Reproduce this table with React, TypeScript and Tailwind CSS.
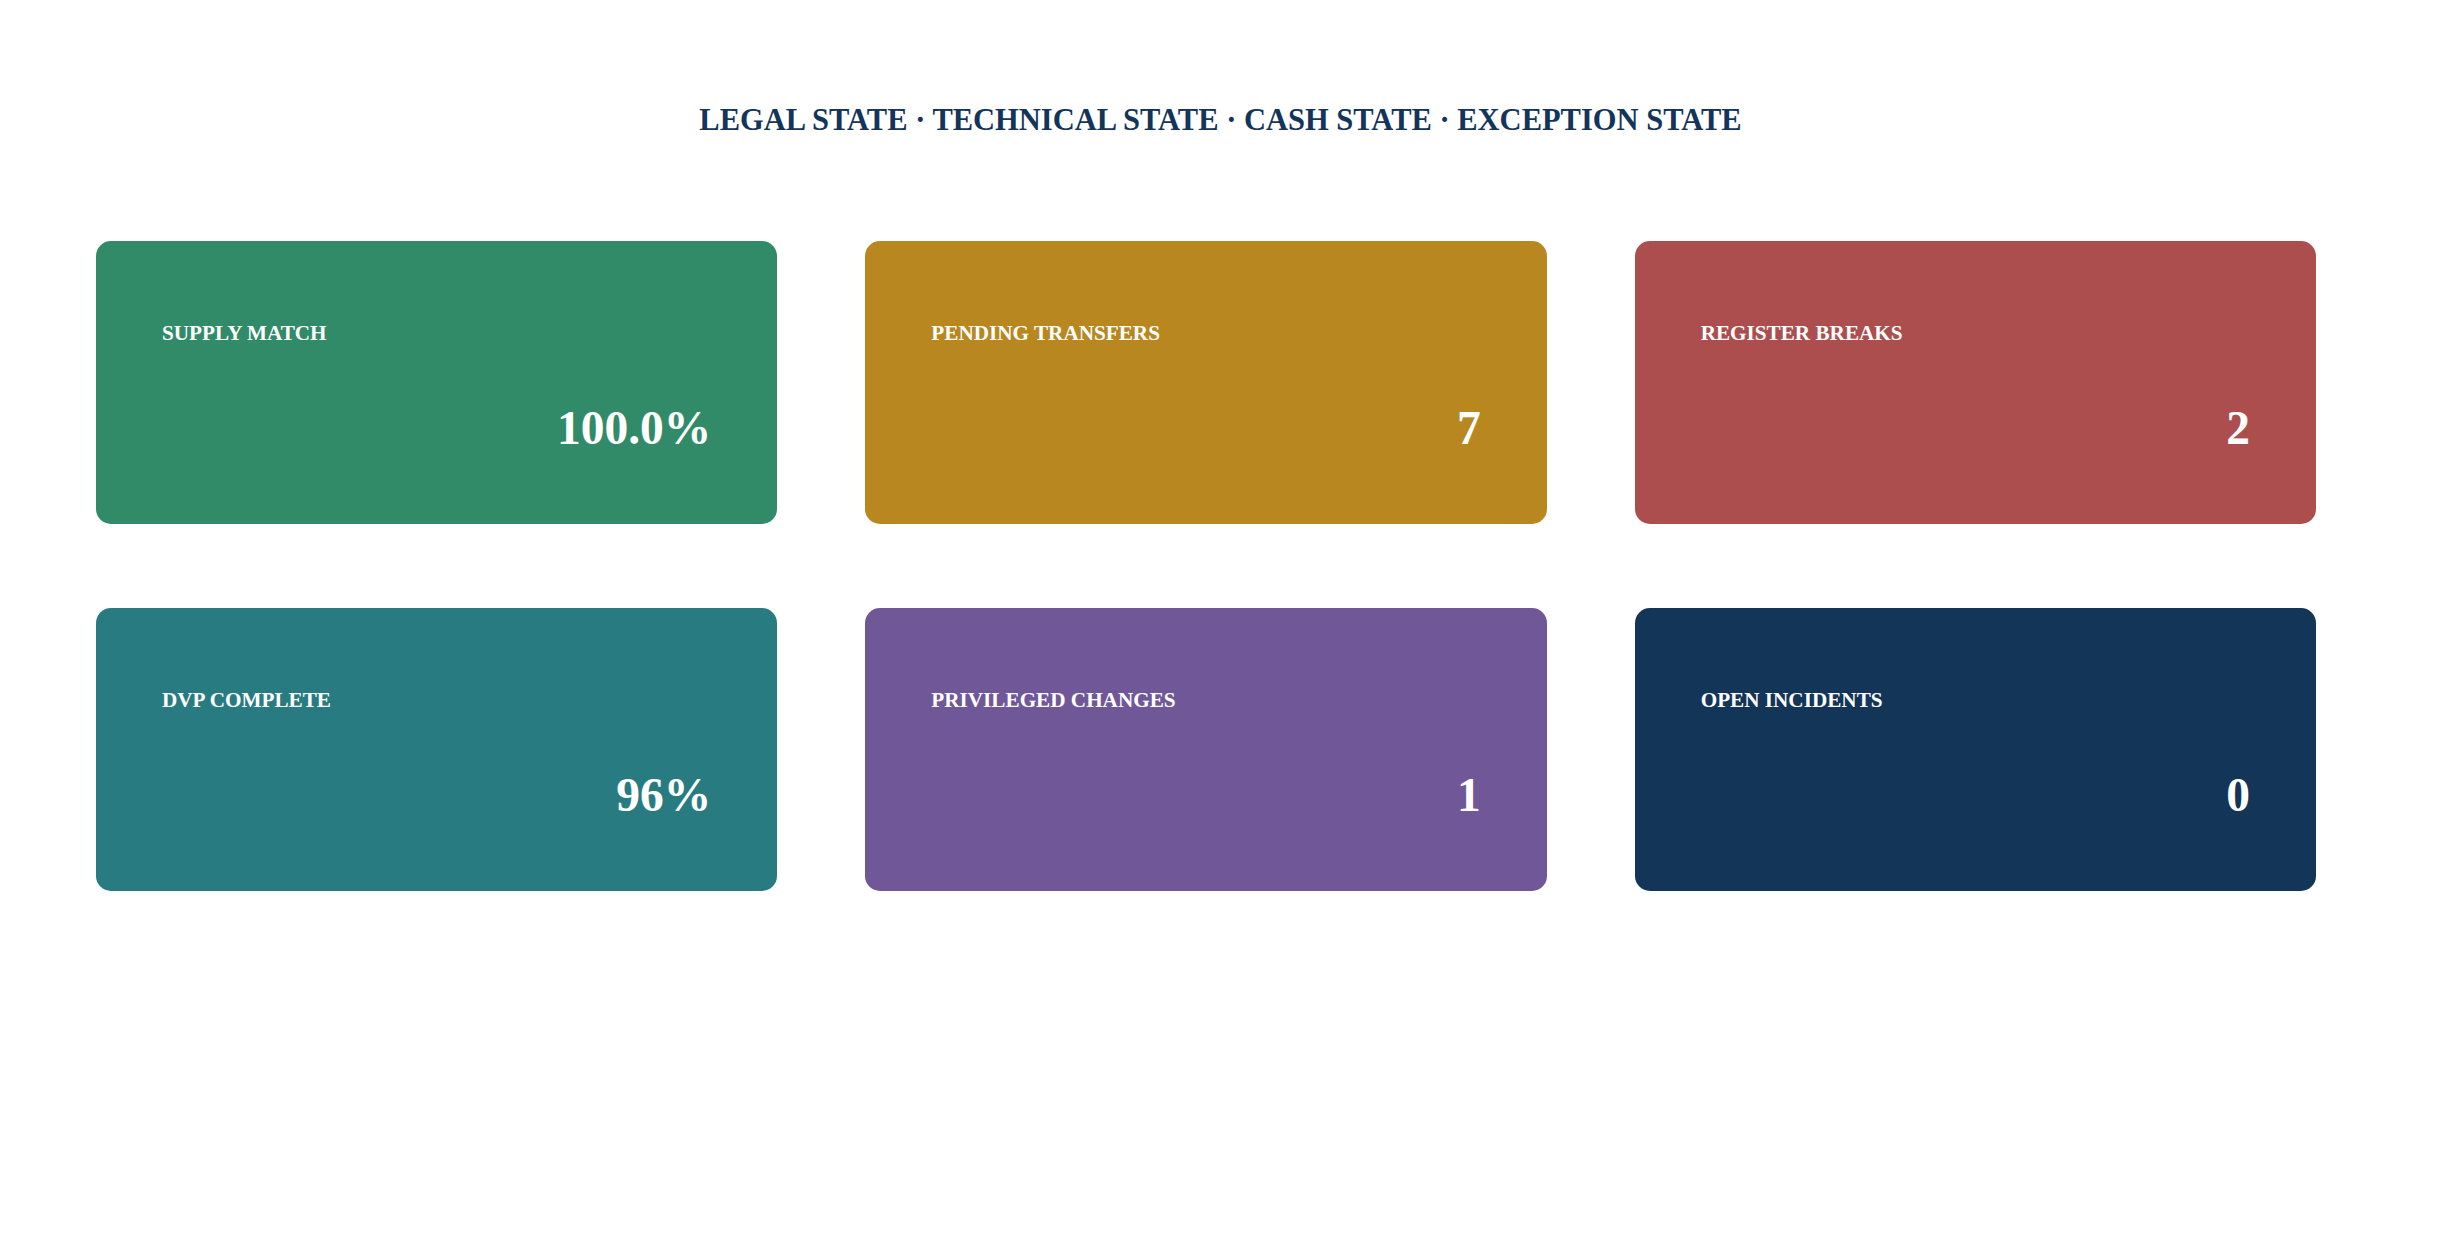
const cards = [
  { label: "SUPPLY MATCH", value: "100.0%", bg: "bg-[#318b69]" },
  { label: "PENDING TRANSFERS", value: "7", bg: "bg-[#b88720]" },
  { label: "REGISTER BREAKS", value: "2", bg: "bg-[#ad4e4e]" },
  { label: "DVP COMPLETE", value: "96%", bg: "bg-[#287c81]" },
  { label: "PRIVILEGED CHANGES", value: "1", bg: "bg-[#705798]" },
  { label: "OPEN INCIDENTS", value: "0", bg: "bg-[#133557]" },
];

function StatCard({ label, value, bg }: { label: string; value: string; bg: string }) {
  return (
    <div className={`${bg} h-[283px] rounded-[15px] px-[66px] pt-[82px] flex flex-col text-white`}>
      <div className="text-[21.2px] leading-none font-bold">{label}</div>
      <div className="mt-[61px] text-right text-[47.5px] leading-none font-bold">{value}</div>
    </div>
  );
}

export default function App() {
  return (
    <div
      className="min-h-screen w-full bg-white pt-[105px]"
      style={{ fontFamily: '"Liberation Serif", "Times New Roman", serif' }}
    >
      <h1 className="text-center text-[30.5px] leading-none font-bold text-[#13355a]">
        LEGAL STATE · TECHNICAL STATE · CASH STATE · EXCEPTION STATE
      </h1>
      <div className="mt-[105px] grid grid-cols-3 gap-x-[88px] gap-y-[84px] pl-[96px] pr-[125px]">
        {cards.map((c) => (
          <StatCard key={c.label} {...c} />
        ))}
      </div>
    </div>
  );
}
